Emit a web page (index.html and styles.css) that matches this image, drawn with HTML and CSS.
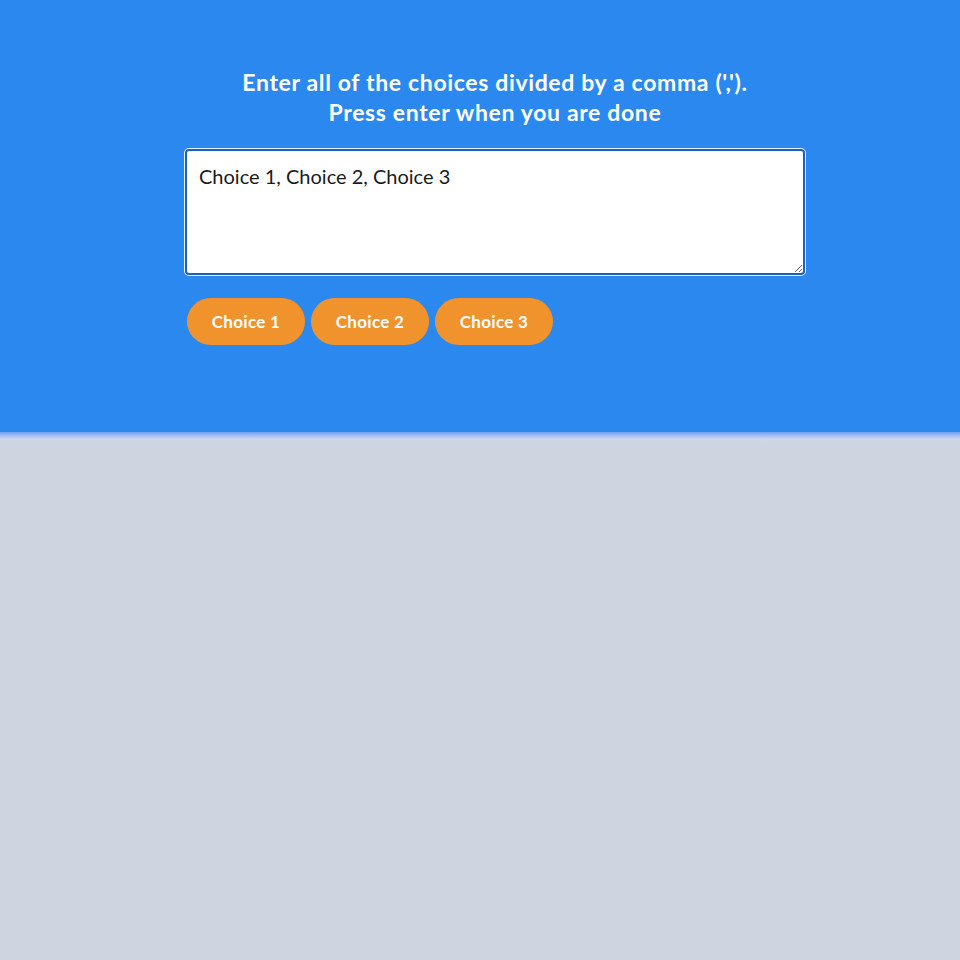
FILE: index.html
```html
<!DOCTYPE html>
<html>
<head>
<meta charset="utf-8">
<link rel="stylesheet" href="styles.css">
</head>
<body>
<header class="hero">
  <h1 class="prompt">Enter all of the choices divided by a comma (',').<br>Press enter when you are done</h1>
  <div class="panel">
    <textarea class="choices-input">Choice 1, Choice 2, Choice 3</textarea>
    <div class="chips">
      <span class="chip">Choice 1</span>
      <span class="chip">Choice 2</span>
      <span class="chip">Choice 3</span>
    </div>
  </div>
</header>
<div class="fade"></div>
<main class="below"></main>
</body>
</html>
```
FILE: styles.css
```css
html, body {
  margin: 0;
  padding: 0;
  height: 100%;
}
body {
  background: #cfd5e0;
  font-family: "Lato", "Open Sans", sans-serif;
}
.hero {
  background: #2b88ee;
  height: 432px;
  box-sizing: border-box;
  padding-top: 67px;
  padding-left: 30px;
  display: flex;
  flex-direction: column;
  align-items: center;
}
.prompt {
  margin: 0;
  color: #fff;
  font-family: "Lato", sans-serif;
  font-weight: 700;
  font-size: 23px;
  line-height: 30px;
  text-align: center;
  letter-spacing: 0.65px;
}
.panel {
  margin-top: 22px;
  width: 620px;
}
.choices-input {
  display: block;
  width: 620px;
  height: 126px;
  box-sizing: border-box;
  resize: vertical;
  border: 2px solid #1b5fce;
  box-shadow: 0 0 0 1px #e8f0fc;
  border-radius: 4px;
  outline: none;
  padding: 13px 12px;
  font-family: "Lato", sans-serif;
  font-size: 20px;
  line-height: 24px;
  color: #1a1a1a;
  background: #fff;
}
.chips {
  display: flex;
  gap: 6px;
  margin-top: 23px;
  padding-left: 2px;
}
.chip {
  display: inline-flex;
  align-items: center;
  justify-content: center;
  width: 118px;
  height: 47px;
  border-radius: 24px;
  background: #f0932d;
  color: #fff;
  font-family: "Lato", sans-serif;
  font-weight: 700;
  font-size: 17px;
  letter-spacing: 0.3px;
}
.fade {
  height: 10px;
  background: linear-gradient(#6b9ff0 0%, #a9c0f0 40%, #cbd6ee 70%, #cfd5e0 100%);
}
```
